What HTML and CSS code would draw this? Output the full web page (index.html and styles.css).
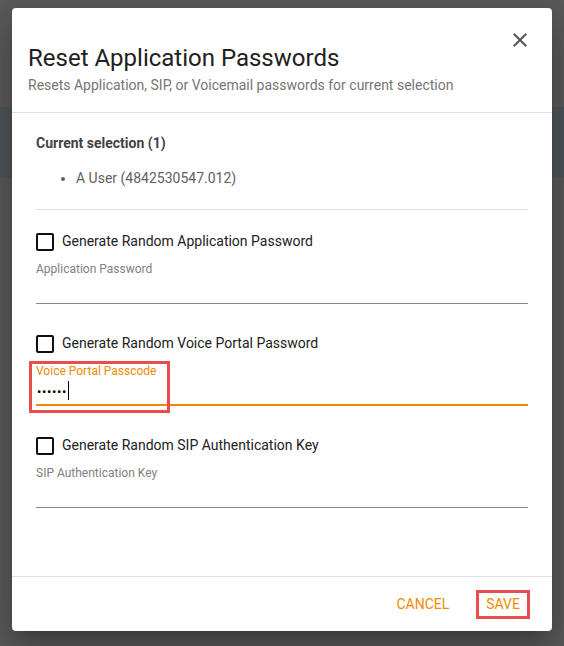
FILE: index.html
```html
<!DOCTYPE html>
<html lang="en">
<head>
<meta charset="utf-8">
<title>Reset Application Passwords</title>
<link rel="stylesheet" href="styles.css">
</head>
<body>
<div class="dialog">
  <div class="header">
    <div class="titles">
      <h2 class="title">Reset Application Passwords</h2>
      <p class="subtitle">Resets Application, SIP, or Voicemail passwords for current selection</p>
    </div>
    <button class="close" aria-label="Close">
      <svg width="24" height="24" viewBox="0 0 24 24"><path d="M19 6.41L17.59 5 12 10.59 6.41 5 5 6.41 10.59 12 5 17.59 6.41 19 12 13.41 17.59 19 19 17.59 13.41 12z" fill="#555"/></svg>
    </button>
  </div>
  <div class="content">
    <div class="sel-title">Current selection (1)</div>
    <ul class="sel-list"><li>A User (4842530547.012)</li></ul>
    <div class="divider"></div>

    <div class="group">
      <label class="check-row"><span class="box"></span><span class="check-label">Generate Random Application Password</span></label>
      <div class="field">
        <div class="field-label">Application Password</div>
        <div class="field-input"></div>
        <div class="field-line"></div>
      </div>
    </div>

    <div class="group">
      <label class="check-row"><span class="box"></span><span class="check-label">Generate Random Voice Portal Password</span></label>
      <div class="field focused">
        <div class="field-label">Voice Portal Passcode</div>
        <div class="field-input"><span class="dots">••••••</span><span class="caret"></span></div>
        <div class="field-line"></div>
        <div class="annot"></div>
      </div>
    </div>

    <div class="group">
      <label class="check-row"><span class="box"></span><span class="check-label">Generate Random SIP Authentication Key</span></label>
      <div class="field">
        <div class="field-label">SIP Authentication Key</div>
        <div class="field-input"></div>
        <div class="field-line"></div>
      </div>
    </div>
  </div>
  <div class="footer">
    <button class="btn">CANCEL</button>
    <button class="btn btn-save">SAVE</button>
  </div>
</div>
</body>
</html>
```
FILE: styles.css
```css
html, body {
  margin: 0;
  padding: 0;
}
body {
  width: 564px;
  height: 646px;
  overflow: hidden;
  font-family: Roboto, "Liberation Sans", sans-serif;
  background: linear-gradient(to bottom, #5a5a5a 0, #5a5a5a 107px, #4f5659 107px, #4f5659 178px, #5a5a5a 178px);
  padding-top: 8px;
  box-sizing: border-box;
}
.dialog {
  margin: 0 12px;
  width: 540px;
  height: 623px;
  background: #fff;
  border-radius: 4px;
  display: flex;
  flex-direction: column;
  box-shadow: 0 11px 15px -7px rgba(0,0,0,.2), 0 24px 38px 3px rgba(0,0,0,.14), 0 9px 46px 8px rgba(0,0,0,.12);
}
.header {
  display: flex;
  align-items: flex-start;
  padding: 34px 20px 0 16px;
  height: 105px;
  box-sizing: border-box;
  border-bottom: 1px solid #e0e0e0;
}
.titles {
  flex: 1;
}
.title {
  margin: 0;
  font-size: 24px;
  line-height: 32px;
  font-weight: 400;
  color: #212121;
}
.subtitle {
  margin: 1px 0 0;
  font-size: 14px;
  line-height: 20px;
  color: #757575;
}
.close {
  border: 0;
  background: none;
  padding: 0;
  margin-top: -14px;
  width: 24px;
  height: 24px;
  cursor: pointer;
}
.close svg {
  display: block;
}
.content {
  flex: 1;
  padding: 20px 24px 0;
}
.sel-title {
  font-size: 14px;
  line-height: 20px;
  font-weight: 700;
  color: #424242;
}
.sel-list {
  margin: 15px 0 0;
  padding-left: 40px;
  font-size: 14px;
  line-height: 20px;
  color: #616161;
}
.divider {
  margin-top: 21px;
  height: 1px;
  background: #e0e0e0;
}
.group {
  padding-top: 21px;
  margin-bottom: 8px;
}
.check-row {
  display: flex;
  align-items: center;
  height: 20px;
  gap: 8px;
}
.box {
  width: 14px;
  height: 14px;
  border: 2px solid #111;
  border-radius: 2px;
  margin-top: 1px;
}
.check-label {
  font-size: 14px;
  color: #212121;
}
.field {
  position: relative;
  margin-top: 10px;
}
.field-label {
  font-size: 12px;
  line-height: 16px;
  color: #808080;
}
.field-input {
  height: 26px;
  display: flex;
  align-items: center;
}
.field-line {
  height: 1px;
  background: #8a8a8a;
}
.focused .field-label {
  color: #f08a00;
}
.focused .field-input {
  height: 25px;
}
.focused .field-line {
  height: 2px;
  background: #f08a00;
}
.dots {
  font-size: 13px;
  letter-spacing: 0.6px;
  color: #000;
  margin-left: 1px;
}
.caret {
  width: 1px;
  height: 19px;
  background: #000;
  margin-left: 1px;
  margin-top: -3px;
}
.annot {
  position: absolute;
  left: -7px;
  top: -2px;
  width: 135px;
  height: 46px;
  border: 3px solid #e84c4c;
}
.footer {
  height: 54px;
  border-top: 1px solid #e0e0e0;
  display: flex;
  align-items: center;
  justify-content: flex-end;
  padding-right: 22px;
  gap: 19px;
}
.btn {
  border: 0;
  background: none;
  font-family: Roboto, "Liberation Sans", sans-serif;
  font-size: 14px;
  font-weight: 400;
  color: #f08a00;
  padding: 0 8px;
  height: 36px;
  cursor: pointer;
}
.btn-save {
  height: 29px;
  border: 3px solid #e84c4c;
  padding: 0 7px;
}
```
